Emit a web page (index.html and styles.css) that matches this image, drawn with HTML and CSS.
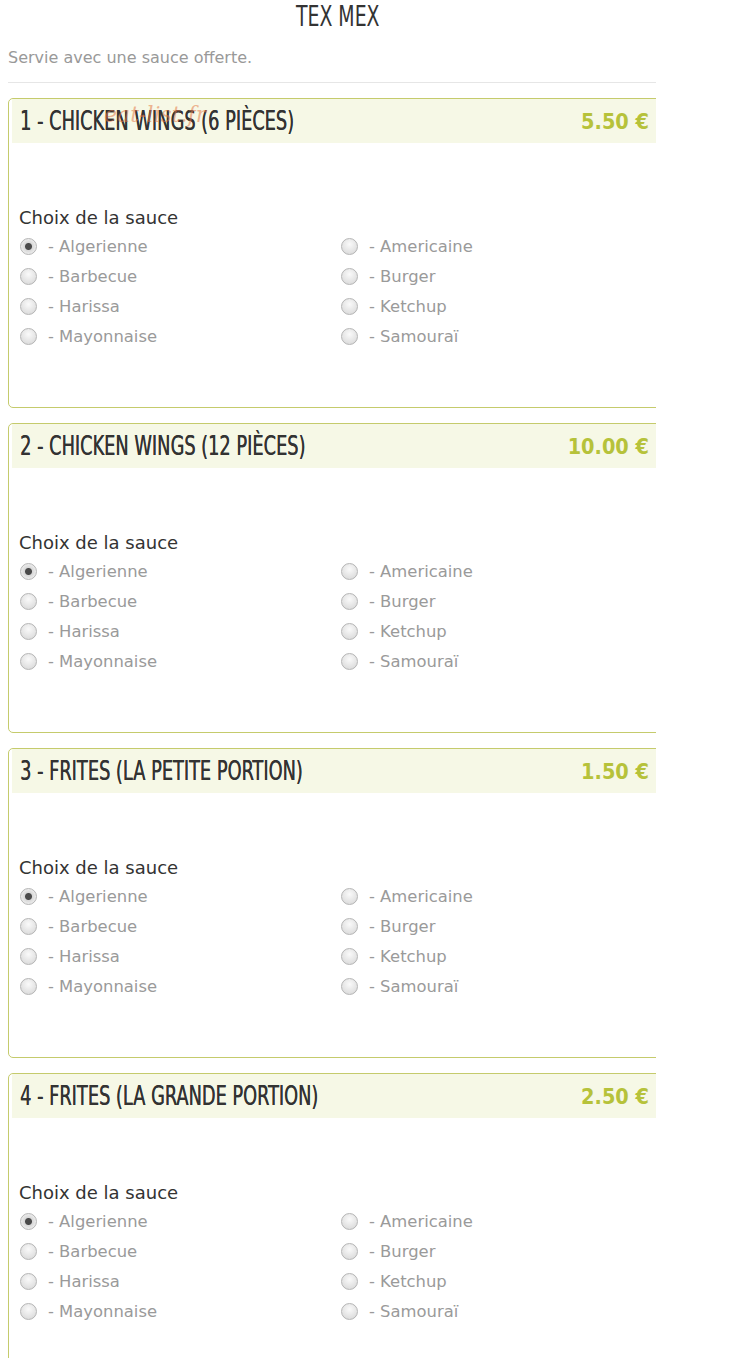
FILE: index.html
```html
<!DOCTYPE html>
<html lang="fr">
<head>
    <meta charset="UTF-8">
    <meta name="viewport" content="width=device-width, initial-scale=1.0">
    <title>Tex Mex</title>
    <link rel="stylesheet" href="styles.css">
</head>
<body>
    <div class="page">
        <h2 class="cat-title"><span>TEX MEX</span></h2>
        <p class="cat-desc">Servie avec une sauce offerte.</p>
        <hr class="sep">

        <div class="product">
            <div class="product-head">
                <span class="product-name">1 - CHICKEN WINGS (6 PIÈCES)</span>
                <span class="product-price">5.50 €</span>
                <span class="watermark">eat-list.fr</span>
            </div>
            <div class="product-body">
                <div class="opt-title">Choix de la sauce</div>
                <div class="opt-grid">
                    <label class="opt"><input type="radio" name="s1" checked> - Algerienne</label>
                    <label class="opt"><input type="radio" name="s1"> - Americaine</label>
                    <label class="opt"><input type="radio" name="s1"> - Barbecue</label>
                    <label class="opt"><input type="radio" name="s1"> - Burger</label>
                    <label class="opt"><input type="radio" name="s1"> - Harissa</label>
                    <label class="opt"><input type="radio" name="s1"> - Ketchup</label>
                    <label class="opt"><input type="radio" name="s1"> - Mayonnaise</label>
                    <label class="opt"><input type="radio" name="s1"> - Samouraï</label>
                </div>
            </div>
        </div>

        <div class="product">
            <div class="product-head">
                <span class="product-name">2 - CHICKEN WINGS (12 PIÈCES)</span>
                <span class="product-price">10.00 €</span>
            </div>
            <div class="product-body">
                <div class="opt-title">Choix de la sauce</div>
                <div class="opt-grid">
                    <label class="opt"><input type="radio" name="s2" checked> - Algerienne</label>
                    <label class="opt"><input type="radio" name="s2"> - Americaine</label>
                    <label class="opt"><input type="radio" name="s2"> - Barbecue</label>
                    <label class="opt"><input type="radio" name="s2"> - Burger</label>
                    <label class="opt"><input type="radio" name="s2"> - Harissa</label>
                    <label class="opt"><input type="radio" name="s2"> - Ketchup</label>
                    <label class="opt"><input type="radio" name="s2"> - Mayonnaise</label>
                    <label class="opt"><input type="radio" name="s2"> - Samouraï</label>
                </div>
            </div>
        </div>

        <div class="product">
            <div class="product-head">
                <span class="product-name">3 - FRITES (LA PETITE PORTION)</span>
                <span class="product-price">1.50 €</span>
            </div>
            <div class="product-body">
                <div class="opt-title">Choix de la sauce</div>
                <div class="opt-grid">
                    <label class="opt"><input type="radio" name="s3" checked> - Algerienne</label>
                    <label class="opt"><input type="radio" name="s3"> - Americaine</label>
                    <label class="opt"><input type="radio" name="s3"> - Barbecue</label>
                    <label class="opt"><input type="radio" name="s3"> - Burger</label>
                    <label class="opt"><input type="radio" name="s3"> - Harissa</label>
                    <label class="opt"><input type="radio" name="s3"> - Ketchup</label>
                    <label class="opt"><input type="radio" name="s3"> - Mayonnaise</label>
                    <label class="opt"><input type="radio" name="s3"> - Samouraï</label>
                </div>
            </div>
        </div>

        <div class="product">
            <div class="product-head">
                <span class="product-name">4 - FRITES (LA GRANDE PORTION)</span>
                <span class="product-price">2.50 €</span>
            </div>
            <div class="product-body">
                <div class="opt-title">Choix de la sauce</div>
                <div class="opt-grid">
                    <label class="opt"><input type="radio" name="s4" checked> - Algerienne</label>
                    <label class="opt"><input type="radio" name="s4"> - Americaine</label>
                    <label class="opt"><input type="radio" name="s4"> - Barbecue</label>
                    <label class="opt"><input type="radio" name="s4"> - Burger</label>
                    <label class="opt"><input type="radio" name="s4"> - Harissa</label>
                    <label class="opt"><input type="radio" name="s4"> - Ketchup</label>
                    <label class="opt"><input type="radio" name="s4"> - Mayonnaise</label>
                    <label class="opt"><input type="radio" name="s4"> - Samouraï</label>
                </div>
            </div>
        </div>
    </div>
</body>
</html>
```

FILE: styles.css
```css
body { margin: 0; background: #fff; font-family: "DejaVu Sans", sans-serif; color: #333; }
.page { width: 648px; padding-left: 8px; overflow: hidden; }
.cat-title { margin: 0; padding-top: 2px; height: 34px; line-height: 30px; text-align: center; padding-left: 12px; font-family: "DejaVu Sans Condensed", sans-serif; font-weight: normal; font-size: 28px; color: #333; }
.cat-title span { display: inline-block; transform: scaleX(0.75); }
.cat-desc { margin: 0; padding-top: 12px; height: 24px; line-height: 20px; font-size: 16px; color: #999; }
.sep { margin: 10px 0 15px; border: 0; border-top: 1px solid #e6e6e6; }
.product { position: relative; width: 670px; margin-bottom: 15px; border: 1px solid #c5cb6c; border-radius: 5px; background: #fff; }
.product-head { display: flex; justify-content: space-between; align-items: center; height: 44px; margin-left: 3px; padding: 0 30px 0 8px; background: #f6f8e6; border-radius: 0 4px 0 0; }
.product-name { display: inline-block; transform: scaleX(0.76); transform-origin: left center; white-space: nowrap; font-family: "DejaVu Sans Condensed", sans-serif; font-size: 26px; color: #333; text-shadow: 0.3px 0 0 #333; }
.product-price { font-family: "DejaVu Sans Condensed", sans-serif; font-weight: bold; font-size: 21.5px; color: #b6c23a; }
.watermark { position: absolute; left: 95px; top: 3px; font-family: "DejaVu Serif", serif; font-style: italic; font-size: 22px; color: rgba(228, 120, 70, 0.55); }
.product-body { padding: 65px 0 56px 10px; }
.opt-title { height: 23px; line-height: 20px; font-size: 18px; color: #333; }
.opt-grid { display: grid; grid-template-columns: 321px 1fr; grid-auto-rows: 30px; }
.opt { display: flex; align-items: center; gap: 11px; font-size: 16.4px; color: #9a9a9a; }
.opt input { appearance: none; width: 17px; height: 17px; margin: 0 0 0 1px; border: 1px solid #b5b5b5; border-radius: 50%; background: radial-gradient(circle at 50% 35%, #fafafa 0, #dcdcdc 80%); }
.opt input:checked { background: radial-gradient(circle, #4a4a4a 0, #4a4a4a 3px, #d8d8d8 4px, #f2f2f2 80%); }
```
